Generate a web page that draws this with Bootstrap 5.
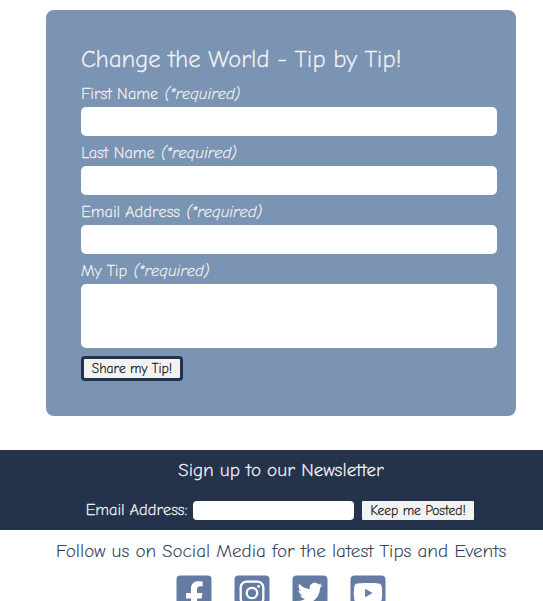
<!DOCTYPE html>
<html lang="en">
<head>
<meta charset="utf-8">
<meta name="viewport" content="width=device-width, initial-scale=1">
<title>Change the World - Tip by Tip!</title>
<link href="https://cdn.jsdelivr.net/npm/bootstrap@5.3.0/dist/css/bootstrap.min.css" rel="stylesheet">
<style>
body{font-family:"Comic Neue",Lato,sans-serif;font-size:16px;font-weight:300;height:100vh;overflow:hidden;color:#24324c;-webkit-text-stroke:.2px currentColor}
.tip-card{width:470px;margin:10px 0 34px 46px;padding:35px 19px 35px 35px;background:#7b94b3;border-radius:8px;color:#f3f3f3}
.tip-title{font-size:24px;line-height:28px;height:30px;font-weight:300;-webkit-text-stroke-width:.45px}
.tip-card label{height:24px;line-height:22px;white-space:nowrap;-webkit-text-stroke-width:.3px}
.tip-card em{margin-left:1px}
.tip-card .form-control{height:29px;min-height:0;padding:2px 6px;border:0;border-radius:5px;margin-bottom:6px}
.tip-card textarea.form-control{height:64px;margin-bottom:8px;resize:none}
.share-btn{width:102px;height:25px;padding:0;border:3px solid #24324c;border-radius:4px;background:#f3f3f3;color:#111;font-size:13.33px;line-height:19px;font-weight:300;-webkit-text-stroke-width:.3px}
.news{height:80px;background:#24324c;color:#f3f3f3}
.news-title{font-size:18.72px;line-height:22px;font-weight:300;padding:9px 0 0 19px;-webkit-text-stroke-width:.4px}
.news-row{margin:20px 0 0 85.5px;height:19px}
.news-row label{width:107.5px;line-height:19px;white-space:nowrap;-webkit-text-stroke-width:.35px}
.news-row .form-control{width:161px;height:19px;min-height:0;padding:0 4px;border:0;border-radius:4px}
.post-btn{width:112px;height:19px;margin-left:8px;padding:0;border:0;border-radius:1px;background:#f3f3f3;color:#111;font-size:13.33px;line-height:19px;font-weight:300;-webkit-text-stroke-width:.3px}
.follow{font-size:18.72px;line-height:22px;font-weight:300;padding:10px 0 0 19px;white-space:nowrap}
.socials{gap:22px;padding:13px 0 0 19px}
.socials svg{width:36px;height:36px;display:block;fill:#647ba3}
</style>
</head>
<body>
<main class="tip-card">
<h1 class="tip-title mb-2">Change the World - Tip by Tip!</h1>
<form>
<label class="d-block" for="first">First Name <em>(*required)</em></label>
<input id="first" class="form-control" type="text">
<label class="d-block" for="last">Last Name <em>(*required)</em></label>
<input id="last" class="form-control" type="text">
<label class="d-block" for="mail">Email Address <em>(*required)</em></label>
<input id="mail" class="form-control" type="email">
<label class="d-block" for="tip">My Tip <em>(*required)</em></label>
<textarea id="tip" class="form-control"></textarea>
<button class="share-btn d-block" type="button">Share my Tip!</button>
</form>
</main>
<section class="news">
<h2 class="news-title text-center m-0">Sign up to our Newsletter</h2>
<form class="news-row d-flex">
<label for="news-mail">Email Address:</label>
<input id="news-mail" class="form-control" type="email">
<button class="post-btn" type="button">Keep me Posted!</button>
</form>
</section>
<footer>
<h2 class="follow text-center m-0">Follow us on Social Media for the latest Tips and Events</h2>
<div class="socials d-flex justify-content-center">
<a href="#" aria-label="Facebook"><svg viewBox="-6.4 25.6 460.8 460.8"><path d="M400 32H48A48 48 0 0 0 0 80v352a48 48 0 0 0 48 48h137.25V327.69h-63V256h63v-54.64c0-62.15 37-96.48 93.67-96.48 27.14 0 55.52 4.84 55.52 4.84v61h-31.27c-30.81 0-40.42 19.12-40.42 38.73V256h68.78l-11 71.69h-57.78V480H400a48 48 0 0 0 48-48V80a48 48 0 0 0-48-48z"/></svg></a>
<a href="#" aria-label="Instagram"><svg viewBox="-6.4 25.6 460.8 460.8"><rect y="32" width="448" height="448" rx="48"/><rect x="79" y="111" width="290" height="290" rx="75" fill="none" stroke="#fff" stroke-width="29"/><circle cx="224" cy="256" r="67" fill="none" stroke="#fff" stroke-width="29"/><circle cx="309" cy="171" r="19" fill="#fff"/></svg></a>
<a href="#" aria-label="Twitter"><svg viewBox="-6.4 25.6 460.8 460.8"><path d="M400 32H48C21.5 32 0 53.5 0 80v352c0 26.5 21.5 48 48 48h352c26.5 0 48-21.5 48-48V80c0-26.5-21.5-48-48-48zm-48.9 158.8c.2 2.8.2 5.7.2 8.5 0 86.7-66 186.6-186.6 186.6-37.2 0-71.7-10.8-100.7-29.4 5.3.6 10.4.8 15.8.8 30.7 0 58.9-10.4 81.4-28-28.8-.6-53-19.5-61.3-45.5 10.1 1.5 19.2 1.5 29.6-1.2-30-6.1-52.5-32.5-52.5-64.4v-.8c8.7 4.9 18.9 7.9 29.6 8.3a65.447 65.447 0 0 1-29.2-54.6c0-12.2 3.2-23.4 8.9-33.1 32.3 39.8 80.8 65.8 135.2 68.6-9.3-44.5 24-80.6 64-80.6 18.9 0 35.9 7.9 47.9 20.7 14.8-2.8 29-8.3 41.6-15.8-4.9 15.2-15.2 28-28.8 36.1 13.2-1.4 26-5.1 37.8-10.2-8.9 13.1-20.1 24.7-32.9 34z"/></svg></a>
<a href="#" aria-label="YouTube"><svg viewBox="-6.4 25.6 460.8 460.8"><path d="M186.8 202.1l95.2 54.1-95.2 54.1V202.1zM448 80v352c0 26.5-21.5 48-48 48H48c-26.5 0-48-21.5-48-48V80c0-26.5 21.5-48 48-48h352c26.5 0 48 21.5 48 48zm-42 176.3s0-59.6-7.6-88.2c-4.2-15.8-16.5-28.2-32.2-32.4C337.9 128 224 128 224 128s-113.9 0-142.2 7.7c-15.7 4.2-28 16.6-32.2 32.4-7.6 28.5-7.6 88.2-7.6 88.2s0 59.6 7.6 88.2c4.2 15.8 16.5 27.7 32.2 31.9C110.1 384 224 384 224 384s113.9 0 142.2-7.7c15.7-4.2 28-16.1 32.2-31.9 7.6-28.5 7.6-88.1 7.6-88.1z"/></svg></a>
</div>
</footer>
<script src="https://cdn.jsdelivr.net/npm/bootstrap@5.3.0/dist/js/bootstrap.bundle.min.js"></script>
</body>
</html>
